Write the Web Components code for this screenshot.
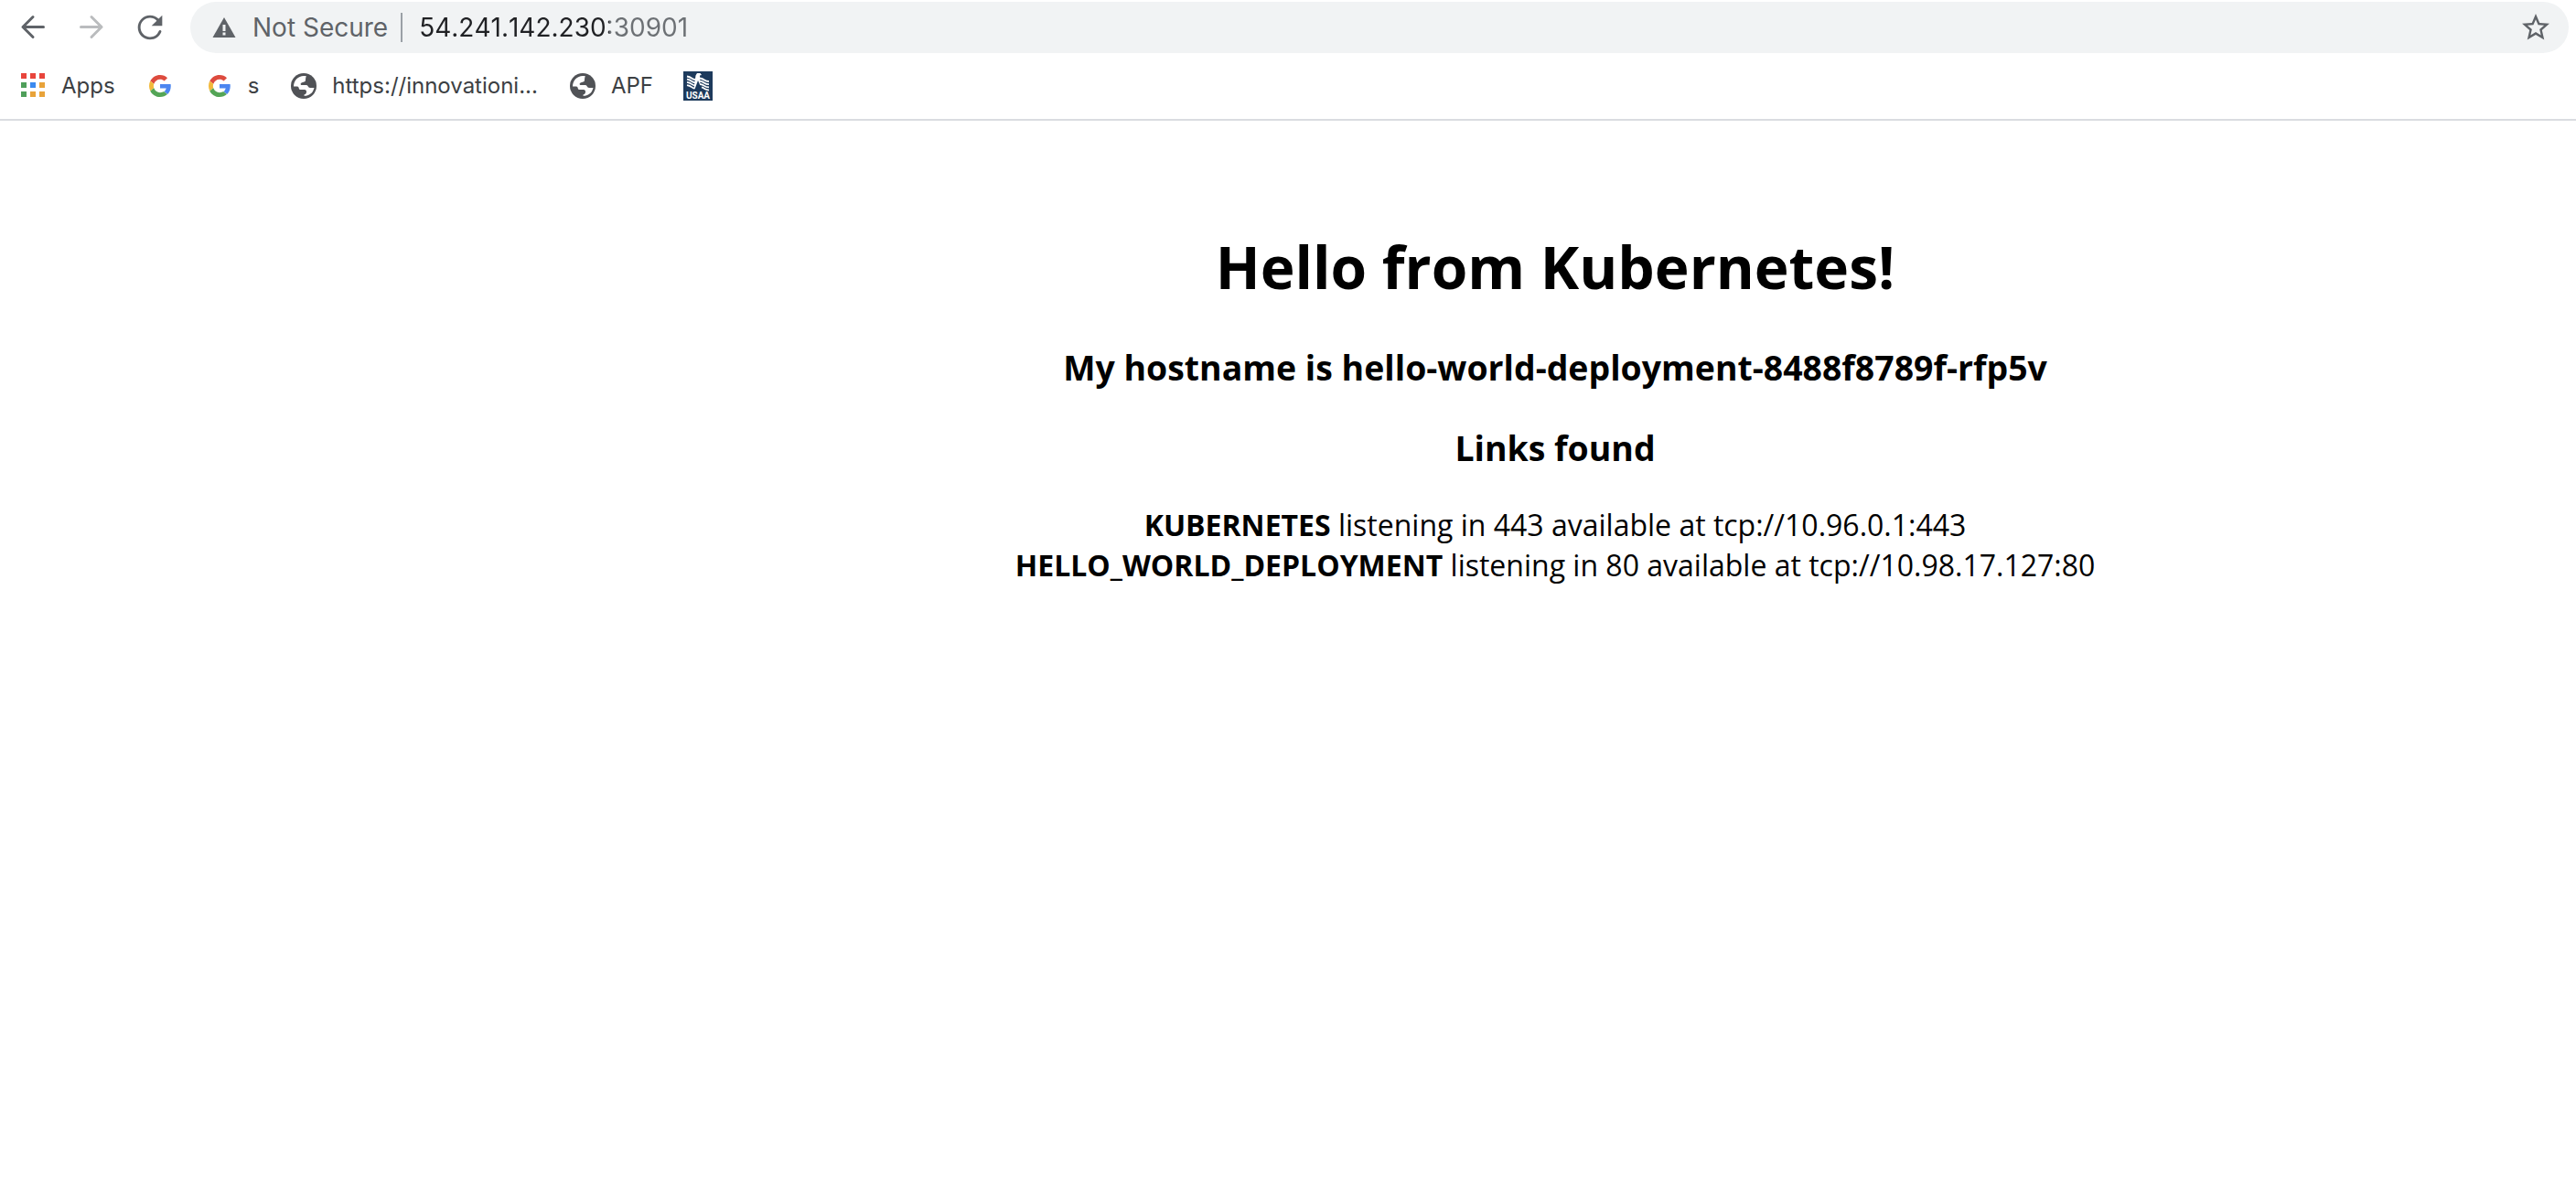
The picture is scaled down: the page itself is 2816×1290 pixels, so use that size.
<!DOCTYPE html>
<html lang="en">
<head>
<meta charset="utf-8">
<title>Hello from Kubernetes!</title>
<style>
body { margin: 0; background: #fff; color: #000; font-family: "Open Sans", sans-serif; font-size: 32px; }
</style>
</head>
<body>
<browser-toolbar></browser-toolbar>
<bookmarks-bar>
  <bookmark-item icon="apps">Apps</bookmark-item>
  <bookmark-item icon="google" label="Google"></bookmark-item>
  <bookmark-item icon="google">s</bookmark-item>
  <bookmark-item icon="globe">https://innovationi...</bookmark-item>
  <bookmark-item icon="globe">APF</bookmark-item>
  <bookmark-item icon="usaa" label="USAA"></bookmark-item>
</bookmarks-bar>
<hello-page host="hello-world-deployment-8488f8789f-rfp5v">
  <service-link name="KUBERNETES">listening in 443 available at tcp://10.96.0.1:443</service-link>
  <service-link name="HELLO_WORLD_DEPLOYMENT">listening in 80 available at tcp://10.98.17.127:80</service-link>
</hello-page>
<script>
const ICONS = {
  back: `<svg width="32" height="32" viewBox="0 0 32 32" fill="none" stroke="#5f6368" stroke-width="3" stroke-linecap="round" stroke-linejoin="round"><path d="M27.500 15.500H5M16 4.500L5 15.500L16 26.500"/></svg>`,
  forward: `<svg width="32" height="32" viewBox="0 0 32 32" fill="none" stroke="#babcbe" stroke-width="3" stroke-linecap="round" stroke-linejoin="round"><path d="M4.500 15.500H27M16 4.500L27 15.500L16 26.500"/></svg>`,
  reload: `<svg width="40" height="40" viewBox="0 0 24 24" fill="#5f6368"><path d="M17.650 6.350A7.958 7.958 0 0 0 12 4c-4.420 0-7.990 3.580-7.990 8s3.570 8 7.990 8c3.400 0 6.300-2.100 7.450-5.100a.9.9 0 0 0-1.700-.55A6.250 6.250 0 0 1 12 18.250c-3.450 0-6.250-2.800-6.250-6.250S8.550 5.750 12 5.750c1.750 0 3.300.7 4.400 1.850L13 11h7V4z"/></svg>`,
  warning: `<svg width="26" height="22" viewBox="0 0 26 22"><path fill="#5f6368" d="M13 0L25.500 22H.5z"/><path fill="#f1f3f4" d="M11.500 8h3v7h-3zM11.500 16.500h3v3h-3z"/></svg>`,
  star: `<svg width="36" height="36" viewBox="0 0 24 24" fill="#5f6368"><path d="M22 9.240l-7.190-.62L12 2 9.190 8.630 2 9.240l5.460 4.730L5.820 21 12 17.270 18.180 21l-1.630-7.030L22 9.240zM12 15.400l-3.760 2.270 1-4.280-3.320-2.880 4.380-.38L12 6.100l1.710 4.040 4.380.38-3.320 2.880 1 4.280L12 15.400z"/></svg>`,
  apps: `<svg width="32" height="32" viewBox="0 0 32 32"><path fill="#e8453c" d="M3 2h6v6H3zM13 2h6v6h-6zM23 2h6v6h-6z"/><path fill="#4f9f5a" d="M3 12h6v6H3zM3 22h6v6H3z"/><path fill="#3b8af0" d="M13 12h6v6h-6z"/><path fill="#e8a33a" d="M23 12h6v6h-6zM13 22h6v6h-6zM23 22h6v6h-6z"/></svg>`,
  google: `<svg width="32" height="32" viewBox="-8 -8 64 64"><path fill="#dd4b3e" d="M24 9.500c3.540 0 6.710 1.220 9.210 3.600l6.850-6.850C35.900 2.380 30.470 0 24 0 14.620 0 6.510 5.380 2.560 13.220l7.980 6.190C12.430 13.720 17.740 9.500 24 9.500z"/><path fill="#4c86f0" d="M47.500 24.550c0-1.570-.15-3.090-.38-4.550H24v9.020h13.400c-.58 2.960-2.260 5.480-4.780 7.180l7.730 6C44.860 38.020 47.500 31.840 47.500 24.550z"/><path fill="#f2b93b" d="M10.530 28.590c-.48-1.450-.76-2.990-.76-4.590s.27-3.140.76-4.590l-7.980-6.190C.92 16.460 0 20.120 0 24c0 3.880.92 7.540 2.560 10.780l7.970-6.190z"/><path fill="#54a556" d="M24 48c6.480 0 11.930-2.130 15.890-5.810l-7.730-6c-2.150 1.450-4.920 2.300-8.160 2.300-6.260 0-11.570-4.220-13.470-9.910l-7.980 6.190C6.510 42.620 14.620 48 24 48z"/></svg>`,
  globe: `<svg width="32" height="32" viewBox="0 0 32 32"><circle cx="16" cy="16" r="14" fill="#505256"/><path fill="#fff" d="M18.500 5C19 5 18 7 18 9.500c0 1.500-1 2-3 2.500-3 .5-3 3-1 3h5c2 0 1.500 3 4 3h4.500C26 24 22 26.700 16.500 26.800v-1.300c2-.5 2.500-1.500 2.500-3.500 0-1.500-1.500-2-2.500-2H12c-1.500 0-1-3.500-3-3.500H5C5 10 10 5 16 5z"/></svg>`,
  usaa: `<svg width="32" height="32" viewBox="0 0 32 32"><path fill="#1d3a5c" d="M0 0h32v32H0z"/><g fill="none" stroke="#fff" stroke-width="1.800"><path d="M4 5.500q3 .5 5 2t4 1.500M4 8.700q3 .5 5 2t4 1.500M4 11.900q3 .5 5 2t4 1.500M4 15.100q3 .5 5 2t3 1.500M18 7.500q3 .5 5 2t5 1.500M18 10.700q3 .5 5 2t5 1.500M18 13.900q3 .5 5 2t5 1.500M20 17.300q2 .5 3 1.500t5 1.800"/></g><path fill="#fff" d="M13.500 4.500L15 2h3.500L20 4l-2 .5.500 11-2.500-5.500-3.500 9.500-1-1z"/><text x="16" y="30" text-anchor="middle" font-family="Roboto, sans-serif" font-size="10" font-weight="700" fill="#fff">USAA</text></svg>`
};

class BrowserToolbar extends HTMLElement {
  constructor() {
    super();
    this.attachShadow({ mode: "open" }).innerHTML = `
      <style>
        :host { display: flex; align-items: center; gap: 12px; padding: 2px 8px 0 4px; font-family: Inter, sans-serif; font-size: 28px; }
        nav { display: flex; }
        button { display: grid; place-items: center; width: 64px; height: 56px; padding: 0; border: 0; background: none; }
        svg { display: block; }
        .box { flex: 1; display: flex; align-items: center; height: 56px; padding: 0 4px 0 24px; border-radius: 28px; background: #f1f3f4; box-sizing: border-box; }
        label { color: #5f6368; margin-left: 18px; padding-right: 14px; }
        .rule { width: 2px; height: 32px; margin-right: 18px; background: #9aa0a6; }
        input { flex: 1; min-width: 0; height: 40px; padding: 0; border: 0; outline: 0; font: inherit; font-kerning: none; color: #202124;
          background: linear-gradient(90deg, #202124 208px, #6c7074 208px); -webkit-background-clip: text; background-clip: text; -webkit-text-fill-color: transparent; }
      </style>
      <nav>
        <button aria-label="Back">${ICONS.back}</button>
        <button aria-label="Forward" disabled>${ICONS.forward}</button>
        <button aria-label="Reload">${ICONS.reload}</button>
      </nav>
      <div class="box">
        ${ICONS.warning}
        <label for="url">Not Secure</label>
        <span class="rule"></span>
        <input id="url" type="text" spellcheck="false" value="54.241.142.230:30901">
        <button aria-label="Bookmark this page">${ICONS.star}</button>
      </div>`;
  }
}

class BookmarksBar extends HTMLElement {
  constructor() {
    super();
    this.attachShadow({ mode: "open" }).innerHTML = `
      <style>
        :host { display: flex; align-items: center; gap: 33px; height: 72px; padding-left: 20px; border-bottom: 2px solid #dadce0; font-family: Inter, sans-serif; font-size: 24px; }
      </style>
      <slot></slot>`;
  }
}

class BookmarkItem extends HTMLElement {
  connectedCallback() {
    const label = this.getAttribute("label");
    this.attachShadow({ mode: "open" }).innerHTML = `
      <style>
        :host { display: block; }
        a { display: flex; align-items: center; gap: 15px; color: #3c4043; text-decoration: none; white-space: nowrap; line-height: 32px; }
        svg { display: block; flex: none; }
      </style>
      <a href="#"${label ? ` aria-label="${label}"` : ""}>${ICONS[this.getAttribute("icon")]}${label ? "" : "<span><slot></slot></span>"}</a>`;
  }
}

class HelloPage extends HTMLElement {
  connectedCallback() {
    this.attachShadow({ mode: "open" }).innerHTML = `
      <style>
        :host { display: flow-root; padding: 73px 0 0 584px; text-align: center; line-height: 44px; }
        h1 { margin: 43px 0 41px; line-height: 88px; }
        h3 { margin: 38px 0 37px; line-height: 50px; }
      </style>
      <h1>Hello from Kubernetes!</h1>
      <h3>My hostname is ${this.getAttribute("host")}</h3>
      <h3>Links found</h3>
      <slot></slot>`;
  }
}

class ServiceLink extends HTMLElement {
  connectedCallback() {
    this.attachShadow({ mode: "open" }).innerHTML = `
      <style>:host { display: block; }</style>
      <b>${this.getAttribute("name")}</b> <slot></slot>`;
  }
}

customElements.define("browser-toolbar", BrowserToolbar);
customElements.define("bookmarks-bar", BookmarksBar);
customElements.define("bookmark-item", BookmarkItem);
customElements.define("hello-page", HelloPage);
customElements.define("service-link", ServiceLink);
</script>
</body>
</html>
